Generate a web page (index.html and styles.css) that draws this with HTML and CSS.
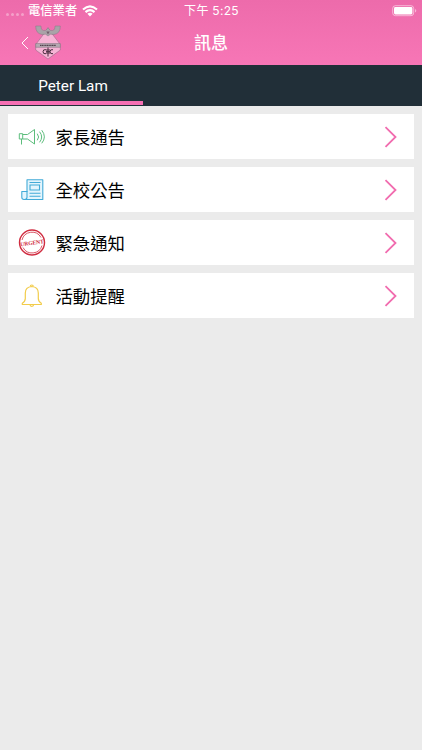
FILE: index.html
```html
<!DOCTYPE html>
<html lang="zh-Hant">
<head>
  <meta charset="UTF-8">
  <meta name="viewport" content="width=device-width, initial-scale=1.0">
  <title>訊息</title>
  <link rel="stylesheet" href="styles.css">
</head>
<body>

<header class="header">
  <div class="status-bar">
    <div class="carrier">
      <span class="signal"><i></i><i></i><i></i><i></i></span>
      <span>電信業者</span>
      <svg class="wifi" width="16" height="12" viewBox="0 0 16 12" fill="none" stroke="#fff" stroke-width="2.1">
        <path d="M1 4.6Q8-1.8 15 4.6M3.5 7.1Q8 3.2 12.5 7.1"/>
        <path d="M5.4 8.8Q8 6.8 10.6 8.8L8 11.5Z" fill="#fff" stroke="none"/>
      </svg>
    </div>
    <div class="time">下午 5:25</div>
    <svg class="battery" width="25" height="12" viewBox="0 0 25 12">
      <rect x=".7" y=".7" width="21" height="10" rx="2.7" fill="none" stroke="#fff" stroke-opacity=".5"/>
      <rect x="2" y="2" width="18.4" height="7.4" rx="1.4" fill="#fff"/>
      <path d="M23 4v3.400q1.300-.5 1.300-1.700T23 4z" fill="#fff" fill-opacity=".5"/>
    </svg>
  </div>
  <div class="nav-bar">
    <div class="nav-left">
      <svg width="8" height="14" viewBox="0 0 8 14" fill="none" stroke="#fff" stroke-width="1">
        <path d="M7 1L1 7l6 6"/>
      </svg>
      <!-- 校徽 -->
      <svg class="logo" width="26" height="35" viewBox="0 0 26 35">
        <path d="M13 3l5 7 7.300 9.500V25L13 34 .7 25v-5.500L8 10z" fill="#f6b3d5" stroke="#9a6c88" stroke-width=".6"/>
        <path d="M.7 1H6q-.5 4 2.500 4.500Q11 6 12 4l1-1.500L14 4q1 2 3.500 1.500Q20.500 5 20 1h5.300q.2 7.500-6.300 8.500l-3.500-.3L13 11l-2.500-1.800L7 9.500Q.5 8.500.7 1z" fill="#a9a3a8" stroke="#857a84" stroke-width=".5"/>
        <path d="M11.300 6.500h3.400L13 9.500z" fill="#75606f"/>
        <path d="M.7 18.500h24.600v3.800H.7z" fill="#b5a9b2" stroke="#83707c" stroke-width=".5"/>
        <path d="M5 20.400h16" stroke="#55434f" stroke-width="1.200" stroke-dasharray="1.300 .4"/>
        <path d="M11 24.700q-3-.6-3 2t3 2M18 24.700q-3-.6-3 2t3 2M13 22.500v9M11 26.700h4M12 24v5M14 24v5" fill="none" stroke="#4a2e40"/>
      </svg>
    </div>
    <h1>訊息</h1>
  </div>
</header>

<nav class="tabs">
  <a class="tab active">Peter Lam</a>
</nav>

<main class="list">
  <a class="item">
    <svg class="icon" width="28" height="28" viewBox="0 0 28 28" fill="none" stroke="#5cbd7c" stroke-width="1">
      <path d="M1.300 10.700h3.400v5.300H1.300zM4.700 11.500h4.800l7-5v14.500l-7-5H4.700M3.500 16v5.500"/>
      <path d="M19.500 11q2.500 3 0 6M21.800 9q4 5 0 10M24 7.500q5 6.500 0 12.500" stroke-linecap="round"/>
    </svg>
    <span>家長通告</span>
    <svg class="arrow" width="14" height="22" viewBox="0 0 14 22"><path d="M1.500 1.200l10 9.800-10 9.800"/></svg>
  </a>
  <a class="item">
    <svg class="icon" width="28" height="28" viewBox="0 0 28 28" fill="none" stroke="#43abd8" stroke-width="1.100">
      <path d="M9 3.700h15.800V23.500H6q-2.200 0-2.200-2.200v-5.800H9z" fill="#e4f5fd" stroke-linejoin="round"/>
      <path d="M9 15v6.300q0 2.200-2.500 2.200M12 9h9.500v5H12zM11.500 6.500h11M11.500 17.300h11M11.500 20.300h11"/>
    </svg>
    <span>全校公告</span>
    <svg class="arrow" width="14" height="22" viewBox="0 0 14 22"><path d="M1.500 1.200l10 9.800-10 9.800"/></svg>
  </a>
  <a class="item">
    <svg class="icon" width="28" height="28" viewBox="0 0 28 28" fill="none" stroke="#d02c40">
      <circle cx="14" cy="13.500" r="12.500" stroke-width="1.400"/>
      <path d="M4 11a10.300 10.300 0 0 1 19-2.500M24 16.500A10.300 10.300 0 0 1 5 18.500" stroke-width=".8"/>
      <text class="stamp" x="14" y="15.800" text-anchor="middle" transform="rotate(-8 14 14)">URGENT</text>
    </svg>
    <span>緊急通知</span>
    <svg class="arrow" width="14" height="22" viewBox="0 0 14 22"><path d="M1.500 1.200l10 9.800-10 9.800"/></svg>
  </a>
  <a class="item">
    <svg class="icon" width="28" height="28" viewBox="0 0 28 28" fill="none" stroke="#f2cc4b" stroke-width="1.200">
      <path d="M4.300 22.500v-1.300q3-1.700 3-4.700V11q0-6 6.500-6.500 6.500.5 6.500 6.500v5.500q0 3 3 4.700v1.300z" stroke-linejoin="round"/>
      <path d="M12.300 4.500q0-1.500 1.500-1.500t1.500 1.500M12 22.500q0 1.800 1.800 1.800t1.800-1.800"/>
    </svg>
    <span>活動提醒</span>
    <svg class="arrow" width="14" height="22" viewBox="0 0 14 22"><path d="M1.500 1.200l10 9.800-10 9.800"/></svg>
  </a>
</main>

</body>
</html>
```
FILE: styles.css
```css
* {
  box-sizing: border-box;
}
body {
  margin: 0;
  min-height: 100vh;
  background: #ebebeb;
  font-family: Inter, "Noto Sans CJK TC", sans-serif;
  color: #000;
}
.header {
  height: 65px;
  background: linear-gradient(#ed6bab, #f776b6);
  color: #fff;
}
.status-bar {
  display: grid;
  grid-template-columns: 1fr auto 1fr;
  align-items: center;
  height: 20px;
  padding: 0 5px 0 6px;
  font-size: 12px;
  line-height: 20px;
}
.carrier {
  display: flex;
  align-items: center;
  padding-top: 1px;
  font-size: 12.3px;
  font-weight: 500;
}
.signal {
  display: flex;
  gap: 2px;
  width: 22px;
  padding-top: 7px;
}
.signal i {
  width: 3px;
  height: 3px;
  border-radius: 50%;
  background: rgba(255, 255, 255, 0.35);
}
.wifi {
  margin-left: 5px;
}
.time {
  padding-top: 1px;
  font-weight: 400;
  letter-spacing: 0.3px;
}
.battery {
  justify-self: end;
}
.nav-bar {
  display: grid;
  grid-template-columns: 1fr auto 1fr;
  align-items: center;
  height: 45px;
}
.nav-left {
  display: flex;
  align-items: center;
  padding-left: 21px;
}
.logo {
  margin-left: 5.5px;
}
h1 {
  margin: 0;
  padding-top: 2px;
  font-size: 17px;
  line-height: 43px;
  font-weight: 500;
}
.tabs {
  display: flex;
  height: 41px;
  background: #212f38;
}
.tab {
  width: 143px;
  height: 40px;
  padding-left: 3px;
  border-bottom: 4px solid #f66fb3;
  font-family: Roboto, sans-serif;
  font-size: 15.3px;
  line-height: 42px;
  text-align: center;
  color: #fff;
}
.list {
  display: flex;
  flex-direction: column;
  gap: 8px;
  padding: 8px 8.4px;
}
.item {
  display: flex;
  align-items: center;
  height: 45px;
  padding: 0 16px 0 9.5px;
  background: #fff;
  font-size: 17.4px;
  line-height: 45px;
}
.item span {
  padding-top: 1px;
}
.icon {
  margin-right: 9.5px;
}
.arrow {
  margin-left: auto;
  fill: none;
  stroke: #f16caf;
  stroke-width: 1.8;
}
.stamp {
  font: bold 5.7px "Liberation Serif", serif;
  letter-spacing: -0.1px;
  fill: #d02c40;
  stroke: none;
}
```
